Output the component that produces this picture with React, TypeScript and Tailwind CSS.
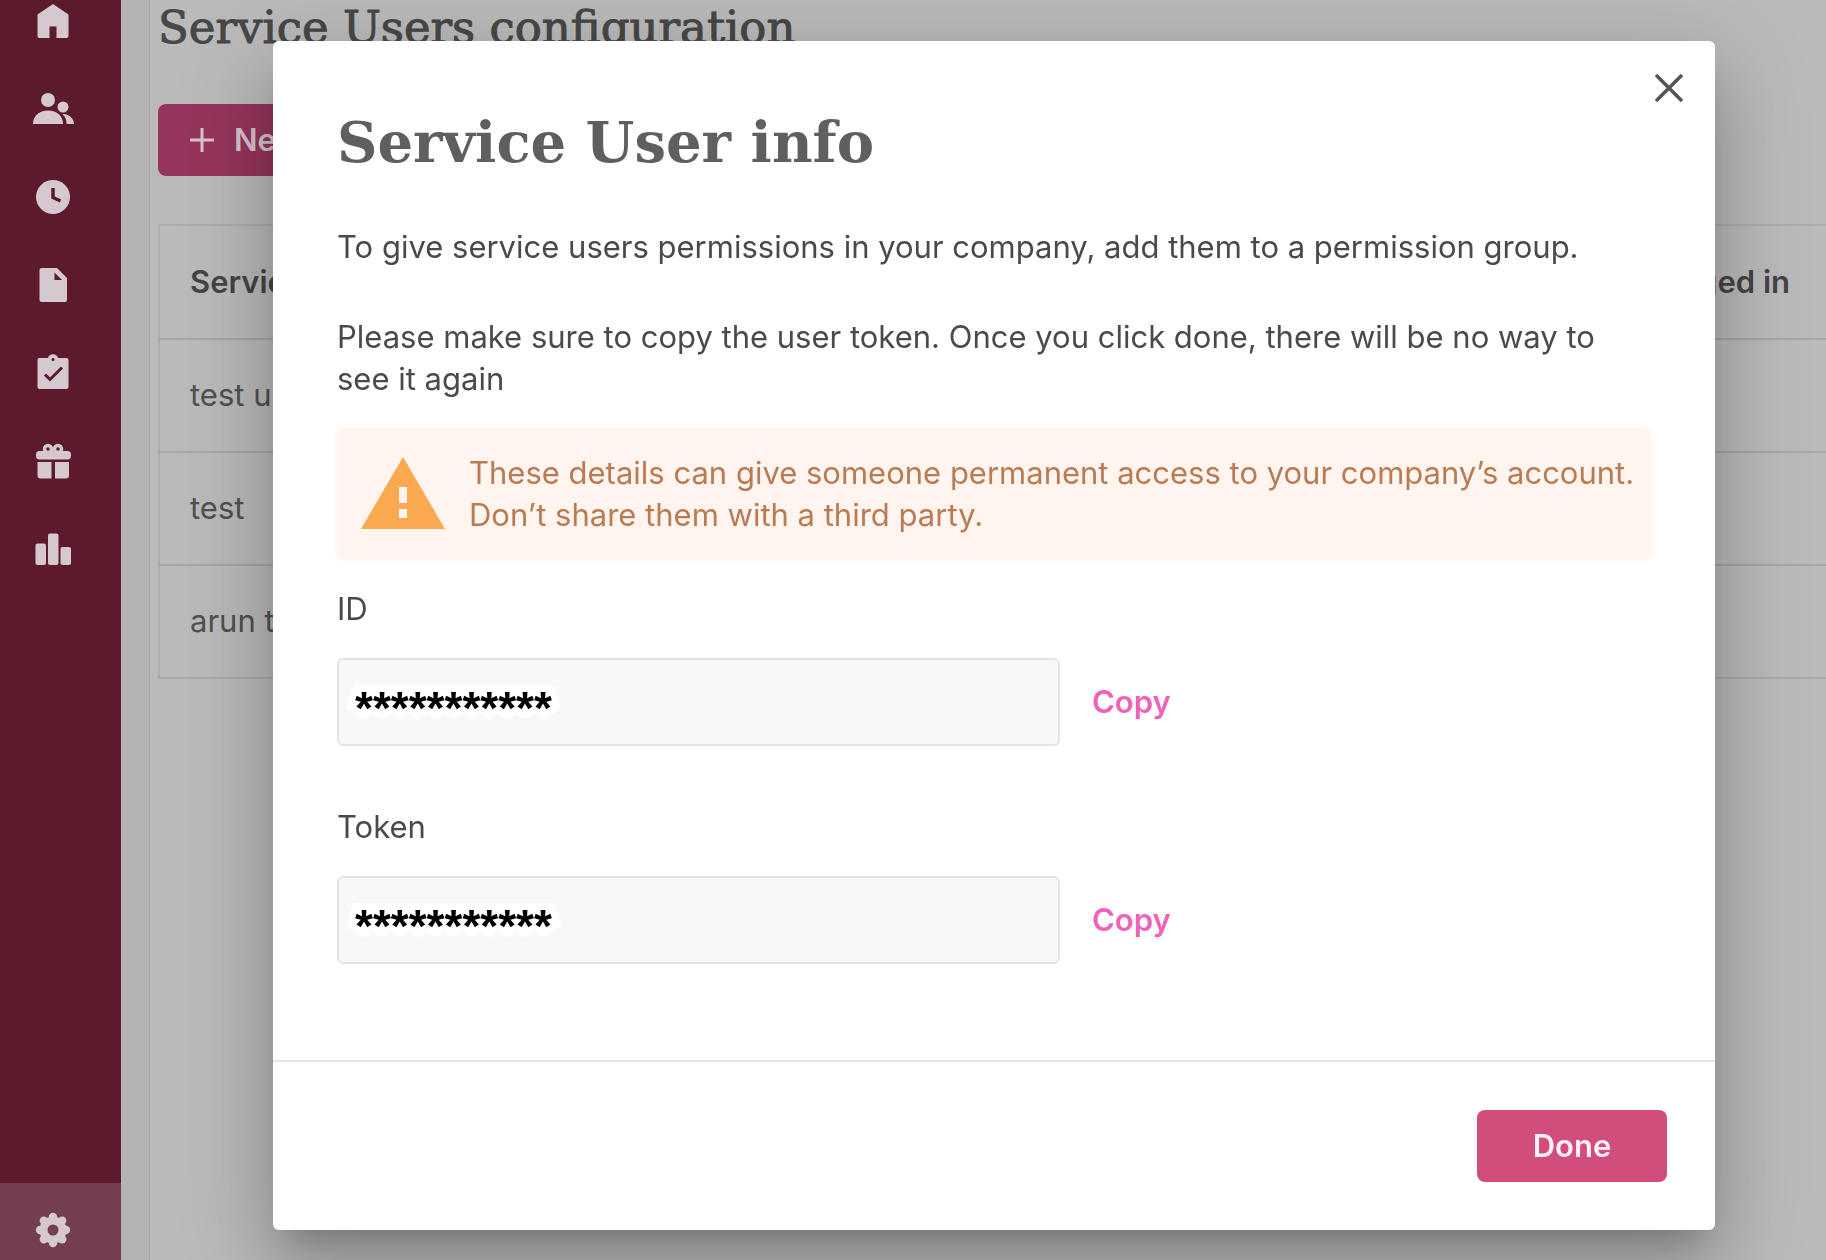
import { useState } from "react";
import type { ReactNode } from "react";

const users = ["test user", "test", "arun test"];

const Icon = ({ children }: { children: ReactNode }) => (
  <svg viewBox="0 0 44 44" className="size-11" fill="currentColor" aria-hidden="true">
    {children}
  </svg>
);

const HomeIcon = () => (
  <Icon>
    <path d="M22 4 6.500 14.500V36q0 2 2 2h10V26.500h7V38h10q2 0 2-2V14.500Z" />
  </Icon>
);

const PeopleIcon = () => (
  <Icon>
    <circle cx="17" cy="12" r="7" />
    <circle cx="32" cy="19" r="5.500" />
    <path d="M2 36c0-8 6-13.500 15-13.500S32 28 32 36Z" />
    <path d="M33 26c6 1 10 5 10 10h-7.500c0-4-1-7.500-4-9.500Z" />
  </Icon>
);

const ClockIcon = () => (
  <Icon>
    <circle cx="22" cy="21" r="17" />
    <path d="M22 12v9.500l7.500 3.500" fill="none" stroke="#5c1a2c" strokeWidth="3.500" />
  </Icon>
);

const DocumentIcon = () => (
  <Icon>
    <path d="M10.500 4H26l10 10v22q0 2-2 2H10.500q-2 0-2-2V6q0-2 2-2Z" />
    <path d="M23.500 8.500v7.500h7.500Z" fill="#5c1a2c" />
  </Icon>
);

const ClipboardIcon = () => (
  <Icon>
    <path d="M8.500 6h8.500c1-5 9-5 10 0h8.500q2 0 2 2v27q0 2-2 2h-27q-2 0-2-2V8q0-2 2-2Z" />
    <circle cx="22" cy="7.500" r="1.500" fill="#5c1a2c" />
    <path d="m14 22.500 5 5L31 15.500" fill="none" stroke="#5c1a2c" strokeWidth="3" />
  </Icon>
);

const GiftIcon = () => (
  <Icon>
    <rect x="5" y="11" width="35" height="8.500" rx="3.500" />
    <path d="M6.500 22h14v16.500h-11q-3 0-3-3ZM24 22h14v13.500q0 3-3 3H24Z" />
    <circle cx="17" cy="9" r="3.500" fill="none" stroke="currentColor" strokeWidth="3.500" />
    <circle cx="27" cy="9" r="3.500" fill="none" stroke="currentColor" strokeWidth="3.500" />
  </Icon>
);

const ChartIcon = () => (
  <Icon>
    <rect x="4.500" y="15.500" width="10.500" height="21.500" rx="2" />
    <rect x="17" y="5.500" width="10.500" height="31.500" rx="2" />
    <rect x="29.500" y="19" width="10.500" height="18" rx="2" />
  </Icon>
);

const CogIcon = () => (
  <Icon>
    <circle cx="22" cy="22" r="9.500" fill="none" stroke="currentColor" strokeWidth="8" />
    {[0, 45, 90, 135, 180, 225, 270, 315].map((angle) => (
      <circle key={angle} cx="22" cy="9" r="4.200" transform={`rotate(${angle} 22 22)`} />
    ))}
  </Icon>
);

const links = [
  { label: "Home", icon: <HomeIcon /> },
  { label: "People", icon: <PeopleIcon /> },
  { label: "Time", icon: <ClockIcon /> },
  { label: "Documents", icon: <DocumentIcon /> },
  { label: "Tasks", icon: <ClipboardIcon /> },
  { label: "Benefits", icon: <GiftIcon /> },
  { label: "Reports", icon: <ChartIcon /> },
];

const Sidebar = () => (
  <nav className="flex w-[121px] shrink-0 flex-col justify-between bg-[#5c1a2c] text-[#d5c8ce]">
    <div className="flex flex-col items-center gap-11 pr-4">
      {links.map((link) => (
        <a key={link.label} href="#" aria-label={link.label}>
          {link.icon}
        </a>
      ))}
    </div>
    <a
      href="#"
      aria-label="Settings"
      className="flex justify-center bg-[#733f4e] pt-[25px] pr-4 pb-2"
    >
      <CogIcon />
    </a>
  </nav>
);

const SecretField = ({ id, label }: { id: string; label: string }) => {
  const [value] = useState("***********");

  return (
    <div className="flex flex-col gap-7">
      <label htmlFor={id} className="leading-[42px]">
        {label}
      </label>
      <div className="flex items-center gap-8">
        <input
          id={id}
          readOnly
          value={value}
          className="h-[88px] w-[723px] rounded-md border-2 border-[#e4e4e4] bg-[#f8f8f8] px-2 pt-3 indent-2 font-['Liberation_Sans',sans-serif] text-[46px] font-bold text-black outline-none [-webkit-text-stroke:14px_white] [paint-order:stroke] [stroke-linejoin:round]"
        />
        <button
          type="button"
          onClick={() => navigator.clipboard?.writeText(value)}
          className="font-semibold text-[#f062b8]"
        >
          Copy
        </button>
      </div>
    </div>
  );
};

const ServiceUserDialog = () => (
  <div className="fixed inset-0 z-10 overflow-hidden pt-[41px] pr-[111px] pl-[273px]">
    <div
      role="dialog"
      aria-modal="true"
      aria-labelledby="dialog-title"
      className="relative rounded-md bg-white text-[#4a4a4a] shadow-[0_22px_30px_-14px_rgba(0,0,0,0.2),0_48px_76px_6px_rgba(0,0,0,0.14),0_18px_92px_16px_rgba(0,0,0,0.12)]"
    >
      <button type="button" aria-label="Close" className="absolute top-7 right-7">
        <svg viewBox="0 0 36 36" className="size-9" stroke="#555" strokeWidth="3.500" aria-hidden="true">
          <path d="m5 6 26 26M31 6 5 32" />
        </svg>
      </button>

      <div className="px-16 pt-[69px] pb-24">
        <h2
          id="dialog-title"
          className="font-['DejaVu_Serif',serif] text-[56px] leading-[64px] font-bold text-[#5f5f5f]"
        >
          Service User info
        </h2>
        <p className="mt-[52px] leading-[42px]">
          To give service users permissions in your company, add them to a permission group.
        </p>
        <p className="mt-12 leading-[42px]">
          Please make sure to copy the user token. Once you click done, there will be no way to see
          it again
        </p>

        <div className="mt-7 flex items-center gap-6 rounded-lg bg-[#fff5ee] py-6 pr-3 pl-6 text-[#b87b54] shadow-[0_0_6px_#fff5ee]">
          <svg viewBox="0 0 84 74" className="h-[74px] w-[84px] shrink-0" aria-hidden="true">
            <path d="M42 0 84 72H0Z" fill="#fba950" />
            <path d="M38 30h8v16h-8ZM38 52h8v9h-8Z" fill="#fff5ee" />
          </svg>
          <p className="leading-[42px]">
            These details can give someone permanent access to your company’s account. Don’t share
            them with a third party.
          </p>
        </div>

        <div className="mt-7 flex flex-col gap-[60px]">
          <SecretField id="service-user-id" label="ID" />
          <SecretField id="service-user-token" label="Token" />
        </div>
      </div>

      <div className="flex justify-end border-t-2 border-[#e4e4e4] px-12 py-12">
        <button
          type="button"
          className="h-[72px] w-[190px] rounded-lg bg-[#d04d7c] font-semibold text-[#fff0f6]"
        >
          Done
        </button>
      </div>
    </div>
  </div>
);

const App = () => (
  <div className="flex min-h-screen overflow-hidden bg-[#bababa] font-[Inter,sans-serif] text-[31px] text-[#505050]">
    <Sidebar />
    <div className="w-7 shrink-0 bg-[#b3b3b3]" />
    <main className="min-w-0 flex-1 border-l border-[#a4a4a4] pl-2">
      <h1 className="font-['DejaVu_Serif',serif] text-[45px] leading-[56px] text-[#474747] [-webkit-text-stroke:1px_#474747]">
        Service Users configuration
      </h1>
      <button
        type="button"
        className="mt-12 flex h-[72px] items-center gap-5 rounded-lg bg-[#96355d] px-8 font-semibold text-[#d9c3cd]"
      >
        <svg viewBox="0 0 24 24" className="size-6" stroke="currentColor" strokeWidth="3" aria-hidden="true">
          <path d="M12 0v24M0 12h24" />
        </svg>
        New service user
      </button>

      <table className="mt-12 w-full border-2 border-r-0 border-[#acacac] text-left">
        <thead>
          <tr className="h-[114px] text-[#444]">
            <th className="pl-[30px] font-semibold">Service user</th>
            <th className="pr-9 text-right font-semibold">Last logged in</th>
          </tr>
        </thead>
        <tbody>
          {users.map((user) => (
            <tr key={user} className="h-[113px] border-t-2 border-[#a6a6a6]">
              <td className="pl-[30px]">{user}</td>
              <td />
            </tr>
          ))}
        </tbody>
      </table>
    </main>
    <ServiceUserDialog />
  </div>
);

export default App;
